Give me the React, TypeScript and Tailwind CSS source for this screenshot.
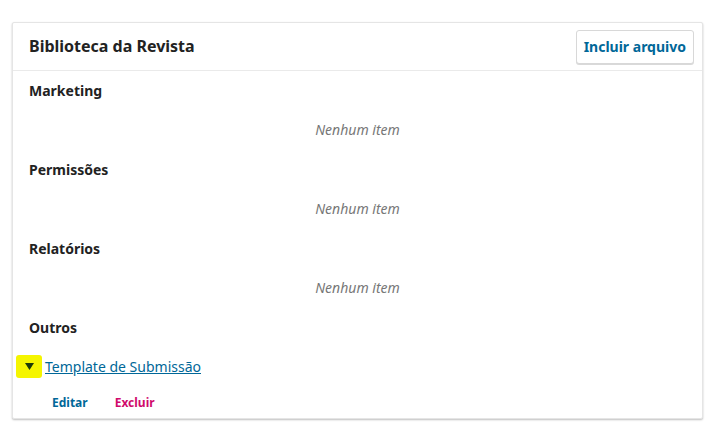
import React from "react";

const Heading = ({ children }: { children: React.ReactNode }) => (
  <div className="h-[39.5px] flex items-center px-4 text-[14px] font-bold text-[#222]">{children}</div>
);
const Empty = () => (
  <div className="h-[39.5px] flex items-center justify-center text-[14px] italic text-[#777] pb-[1px]">Nenhum item</div>
);

export default function App() {
  return (
    <div className="bg-white w-[715px] h-[430px] pt-[22px] pl-[12px]" style={{ fontFamily: '"Noto Sans", sans-serif' }}>
      <div className="w-[691px] border border-[#e5e5e5] shadow-[0_1px_2px_rgba(0,0,0,0.25)] rounded-[2px] bg-white">
        <div className="h-[48px] flex items-center justify-between pl-4 pr-[8px] border-b border-[#eaeaea]">
          <div className="text-[16px] font-bold text-[#222] pb-[1px]">Biblioteca da Revista</div>
          <button className="h-[34px] px-[7px] border border-[#d8d8d8] rounded-[3px] shadow-[0_1px_0_rgba(0,0,0,0.15)] text-[14px] font-bold text-[#006798] bg-white">
            Incluir arquivo
          </button>
        </div>
        <Heading>Marketing</Heading>
        <Empty />
        <Heading>Permissões</Heading>
        <Empty />
        <Heading>Relatórios</Heading>
        <Empty />
        <Heading>Outros</Heading>
        <div className="h-[39.5px] flex items-center pl-[3px] pb-[1px]">
          <span className="w-[26px] h-[23px] bg-[#f5f500] flex items-center justify-center rounded-[3px] mr-[3px]">
            <svg width="9" height="7" viewBox="0 0 9 7"><path d="M0 0 L9 0 L4.5 7 Z" fill="#1d3b0a" /></svg>
          </span>
          <a className="text-[14px] text-[#006798] underline">Template de Submissão</a>
        </div>
        <div className="h-[31px] flex items-center pl-[39px] gap-[27px] text-[12px] font-bold">
          <span className="text-[#006798]">Editar</span>
          <span className="text-[#d00a6c]">Excluir</span>
        </div>
      </div>
    </div>
  );
}
